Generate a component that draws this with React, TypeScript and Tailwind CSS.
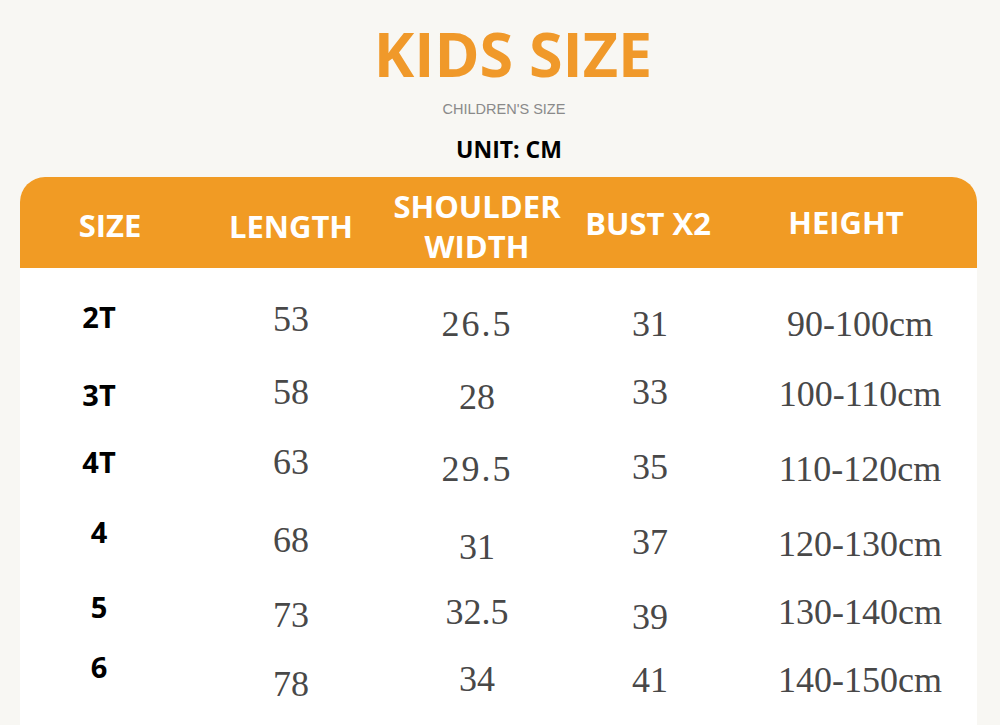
import React from 'react';

type Cell = { text: string; mt: string; extra?: string };
type Row = { h: string; cells: Cell[] };

const rows: Row[] = [
  {
    h: 'h-[73px]',
    cells: [
      { text: '2T', mt: 'mt-[2px]' },
      { text: '53', mt: 'mt-[1px]' },
      { text: '26.5', mt: 'mt-[6px]', extra: 'tracking-[2px]' },
      { text: '31', mt: 'mt-[6px]' },
      { text: '90-100cm', mt: 'mt-[6px]' },
    ],
  },
  {
    h: 'h-[70px]',
    cells: [
      { text: '3T', mt: 'mt-[7px]' },
      { text: '58', mt: 'mt-[1px]' },
      { text: '28', mt: 'mt-[6px]' },
      { text: '33', mt: 'mt-[1px]' },
      { text: '100-110cm', mt: 'mt-[3px]' },
    ],
  },
  {
    h: 'h-[72px]',
    cells: [
      { text: '4T', mt: 'mt-[4px]' },
      { text: '63', mt: 'mt-[1px]' },
      { text: '29.5', mt: 'mt-[8px]', extra: 'tracking-[2px]' },
      { text: '35', mt: 'mt-[6px]' },
      { text: '110-120cm', mt: 'mt-[8px]' },
    ],
  },
  {
    h: 'h-[75px]',
    cells: [
      { text: '4', mt: 'mt-[2px]' },
      { text: '68', mt: 'mt-[7px]' },
      { text: '31', mt: 'mt-[14px]' },
      { text: '37', mt: 'mt-[9px]' },
      { text: '120-130cm', mt: 'mt-[11px]' },
    ],
  },
  {
    h: 'h-[60px]',
    cells: [
      { text: '5', mt: 'mt-[2px]' },
      { text: '73', mt: 'mt-[7px]' },
      { text: '32.5', mt: 'mt-[4px]' },
      { text: '39', mt: 'mt-[9px]' },
      { text: '130-140cm', mt: 'mt-[4px]' },
    ],
  },
  {
    h: 'h-[60px]',
    cells: [
      { text: '6', mt: 'mt-[2px]' },
      { text: '78', mt: 'mt-[16px]' },
      { text: '34', mt: 'mt-[11px]' },
      { text: '41', mt: 'mt-[12px]' },
      { text: '140-150cm', mt: 'mt-[12px]' },
    ],
  },
];

const sans = "font-['Open_Sans',sans-serif]";
const serif = "font-['Liberation_Serif',serif]";

export default function App() {
  return (
    <div className="w-[1000px] h-[725px] overflow-hidden bg-[#f8f7f3] flex flex-col items-center">
      <h1 className={`${sans} mt-[23px] ml-[26px] text-[61px] leading-none font-bold text-[#f0992a]`}>
        KIDS SIZE
      </h1>
      <p className="font-['Liberation_Sans',sans-serif] mt-[18px] ml-[8px] text-[14.5px] leading-none text-[#8a8a8a]">
        CHILDREN'S SIZE
      </p>
      <p className={`${sans} mt-[21px] ml-[18px] text-[23px] leading-none font-bold text-black`}>UNIT: CM</p>

      <div className="mt-[16px] w-[957px] self-start ml-[20px] flex-1 flex flex-col bg-white rounded-t-[25px] overflow-hidden">
        {/* header */}
        <div className={`${sans} h-[91px] bg-[#f19b24] text-white font-bold text-[31px] grid grid-cols-[158px_226px_146px_200px_220px] items-start`}>
          <div className="flex justify-center pl-[22px] mt-[33px] leading-none whitespace-nowrap">SIZE</div>
          <div className="flex justify-center mt-[34px] leading-none whitespace-nowrap">LENGTH</div>
          <div className="flex flex-col items-center mt-[9px] leading-[40px] whitespace-nowrap">
            <span>SHOULDER</span>
            <span>WIDTH</span>
          </div>
          <div className="flex justify-center pr-[4px] mt-[31px] leading-none whitespace-nowrap">BUST X2</div>
          <div className="flex justify-center pr-[28px] mt-[30px] leading-none whitespace-nowrap">HEIGHT</div>
        </div>

        {/* body */}
        <div className="pt-[32px] flex flex-col">
          {rows.map((row) => (
            <div key={row.cells[0].text} className={`${row.h} grid grid-cols-[158px_226px_146px_200px_220px] items-start`}>
              {row.cells.map((c, i) => (
                <div
                  key={i}
                  className={
                    i === 0
                      ? `${sans} ${c.mt} flex justify-center text-[29px] font-bold leading-none text-black whitespace-nowrap`
                      : `${serif} ${c.mt} ${c.extra ?? ''} flex justify-center text-[36px] leading-none text-[#484848] whitespace-nowrap`
                  }
                >
                  {c.text}
                </div>
              ))}
            </div>
          ))}
        </div>
      </div>
    </div>
  );
}
